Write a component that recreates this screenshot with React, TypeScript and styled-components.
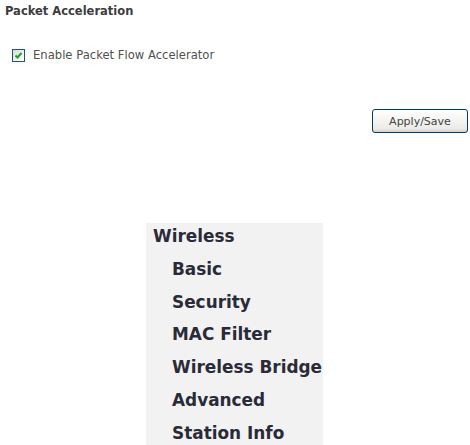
import styled, {createGlobalStyle} from "styled-components";
import * as React from "react";

const GlobalStyle = createGlobalStyle`
    html, body {
        margin: 0;
        padding: 0;
        background: #ffffff;
    }
    body {
        font-family: "DejaVu Sans", Verdana, sans-serif;
    }
`;

const Page = styled.div`
    width: 470px;
    height: 445px;
    overflow: hidden;
    display: flex;
    flex-direction: column;
`;

const Form = styled.form`
    display: flex;
    flex-direction: column;
    padding: 4px 2px 0 5px;
`;

const Title = styled.h2`
    margin: 0;
    font-size: 11.5px;
    font-weight: 700;
    line-height: 14px;
    color: #3c3c3c;
`;

const CheckRow = styled.label`
    display: flex;
    align-items: center;
    gap: 8px;
    margin: 30px 0 0 7px;
    font-size: 11.6px;
    color: #505050;
`;

const CheckBox = styled.span`
    width: 11px;
    height: 11px;
    border: 1px solid #1c5180;
    background: linear-gradient(135deg, #dcdcd6, #ffffff);
    display: flex;
    align-items: center;
    justify-content: center;
`;

const ButtonBar = styled.div`
    display: flex;
    justify-content: flex-end;
    margin-top: 47px;
`;

const Button = styled.button`
    width: 96px;
    height: 24px;
    border: 1px solid #003c74;
    border-radius: 3px;
    background: linear-gradient(#ffffff, #ecebe6 85%, #d6d0c5);
    font-family: "DejaVu Sans", Verdana, sans-serif;
    font-size: 11px;
    color: #444444;
    padding: 0;
`;

const Menu = styled.nav`
    align-self: flex-start;
    margin: 90px 0 0 146px;
    width: 177px;
    flex: 1;
    background: #f2f2f2;
    display: flex;
    flex-direction: column;
`;

const MenuItem = styled.a<{ $sub?: boolean }>`
    display: block;
    height: 32.8px;
    line-height: 26px;
    padding-left: ${({$sub}) => $sub ? '26px' : '7px'};
    font-size: 16.9px;
    font-weight: 700;
    color: #2a2a38;
    text-decoration: none;
    white-space: nowrap;
`;

const items = ['Basic', 'Security', 'MAC Filter', 'Wireless Bridge', 'Advanced', 'Station Info'];

export default function App() {
    return (
        <Page>
            <GlobalStyle />
            <Form onSubmit={(e: React.FormEvent) => e.preventDefault()}>
                <Title>Packet Acceleration</Title>
                <CheckRow>
                    <CheckBox>
                        <svg width="9" height="9" viewBox="0 0 9 9">
                            <path d="M1.5 4.5 L3.5 6.5 L7.5 2" stroke="#21a121" strokeWidth="2" fill="none" />
                        </svg>
                    </CheckBox>
                    Enable Packet Flow Accelerator
                </CheckRow>
                <ButtonBar>
                    <Button type="submit">Apply/Save</Button>
                </ButtonBar>
            </Form>
            <Menu>
                <MenuItem href="#">Wireless</MenuItem>
                {items.map((name) => (
                    <MenuItem key={name} href="#" $sub>{name}</MenuItem>
                ))}
            </Menu>
        </Page>
    );
}
